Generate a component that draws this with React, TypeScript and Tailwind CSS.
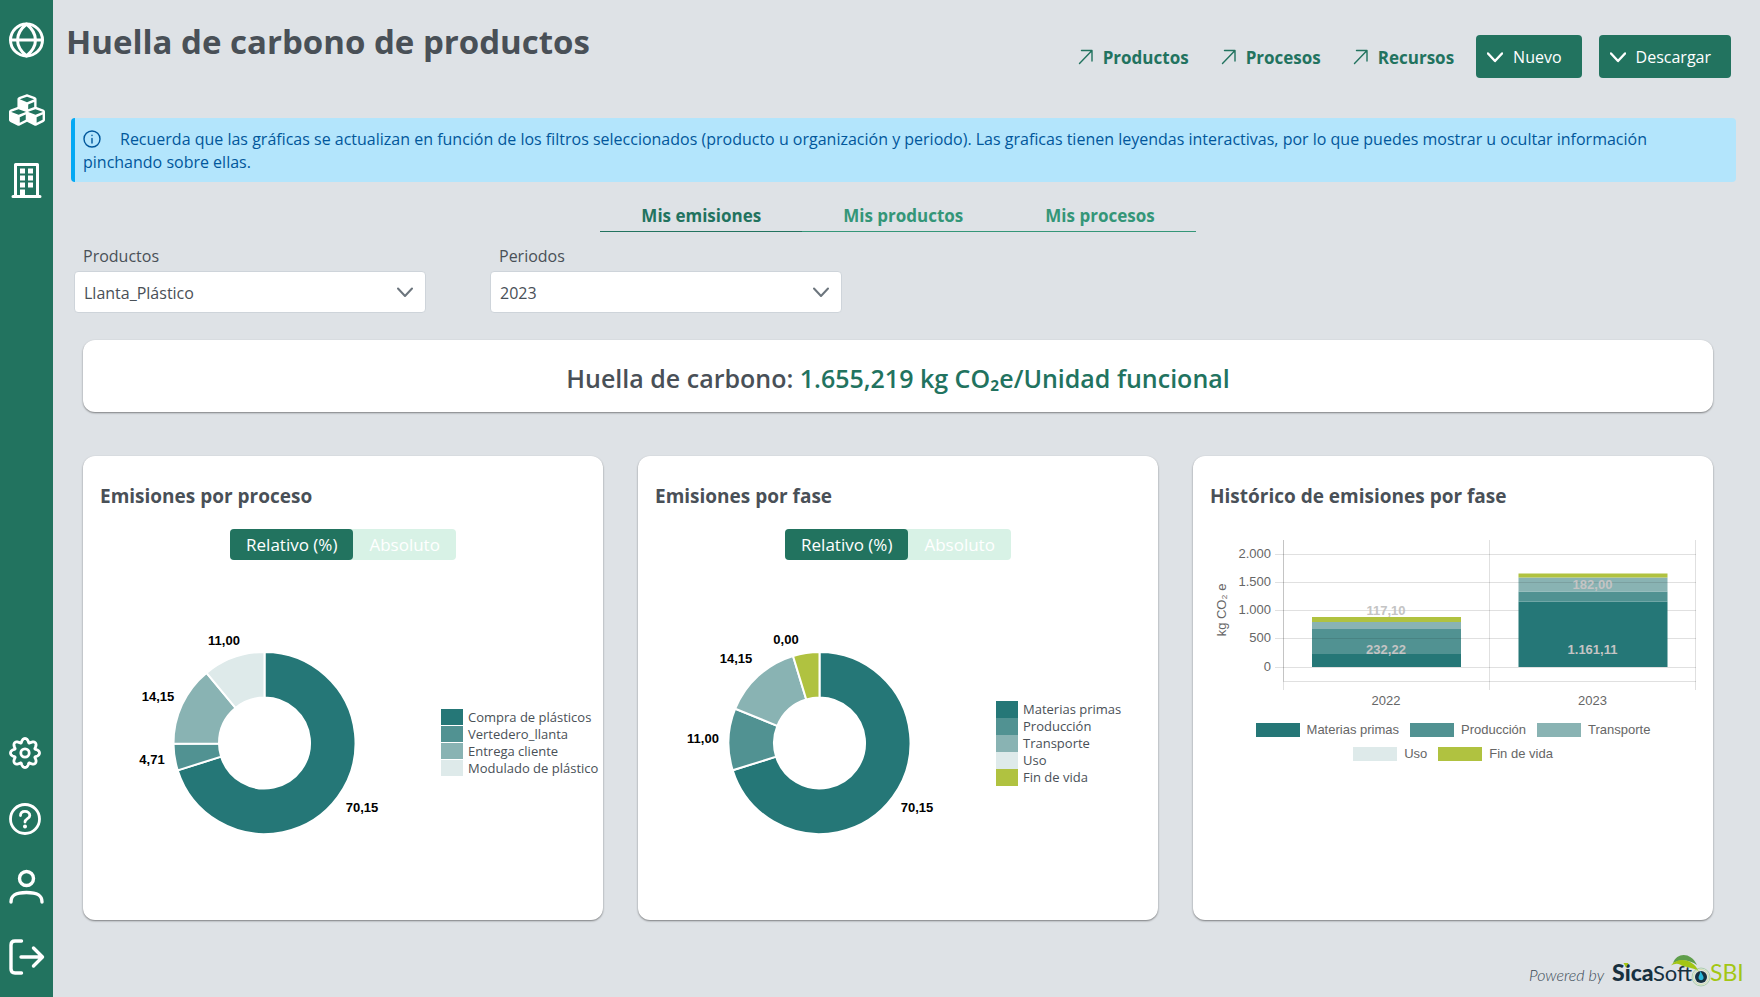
import { useState, type ReactNode } from 'react';
import { FaCubes } from 'react-icons/fa';

type Slice = { color: string; value: number };
type Label = { text: string; x: number; y: number };
type LegendItem = { name: string; color: string };

const TEAL = ['#257777', '#519292', '#89b3b3', '#deeaea', '#b0c240'];

const PROCESS_SLICES: Slice[] = [
  { color: TEAL[0], value: 70.15 },
  { color: TEAL[1], value: 4.71 },
  { color: TEAL[2], value: 14.15 },
  { color: TEAL[3], value: 11 },
];
const PROCESS_LABELS: Label[] = [
  { text: '70,15', x: 262, y: 242 },
  { text: '4,71', x: 52, y: 194 },
  { text: '14,15', x: 58, y: 131 },
  { text: '11,00', x: 124, y: 75 },
];
const PROCESS_LEGEND: LegendItem[] = [
  { name: 'Compra de plásticos', color: 'bg-[#257777]' },
  { name: 'Vertedero_llanta', color: 'bg-[#519292]' },
  { name: 'Entrega cliente', color: 'bg-[#89b3b3]' },
  { name: 'Modulado de plástico', color: 'bg-[#deeaea]' },
];

const PHASE_SLICES: Slice[] = [
  { color: TEAL[0], value: 70.15 },
  { color: TEAL[1], value: 11 },
  { color: TEAL[2], value: 14.15 },
  { color: TEAL[4], value: 4.7 },
];
const PHASE_LABELS: Label[] = [
  { text: '70,15', x: 262, y: 242 },
  { text: '11,00', x: 48, y: 173 },
  { text: '14,15', x: 81, y: 93 },
  { text: '0,00', x: 131, y: 74 },
];
const PHASE_LEGEND: LegendItem[] = [
  { name: 'Materias primas', color: 'bg-[#257777]' },
  { name: 'Producción', color: 'bg-[#519292]' },
  { name: 'Transporte', color: 'bg-[#89b3b3]' },
  { name: 'Uso', color: 'bg-[#deeaea]' },
  { name: 'Fin de vida', color: 'bg-[#b0c240]' },
];

function Icon({ className, box = 36, width = 3, children }: { className: string; box?: number; width?: number; children: ReactNode }) {
  return (
    <svg
      className={className}
      viewBox={`0 0 ${box} ${box}`}
      fill="none"
      stroke="currentColor"
      strokeWidth={width}
      strokeLinecap="round"
      strokeLinejoin="round"
      aria-hidden="true"
    >
      {children}
    </svg>
  );
}

const GlobeIcon = () => (
  <Icon className="size-9">
    <circle cx="17.500" cy="18" r="16" />
    <path d="M2 18H33M17.500 2C5.500 12 5.500 24 17.500 34C29.500 24 29.500 12 17.500 2Z" />
  </Icon>
);

const BuildingIcon = () => (
  <Icon className="size-9">
    <path d="M4 34.500H31M6.500 34V2.500H28.500V34" />
    <path
      stroke="none"
      fill="currentColor"
      d="M11 6.500h5v5h-5zM19 6.500h5v5h-5zM11 13.500h5v5h-5zM19 13.500h5v5h-5zM11 20.500h5v5h-5zM19 20.500h5v5h-5zM11 27.500h5v6h-5z"
    />
  </Icon>
);

const gearPath =
  Array.from({ length: 200 }, (_, i) => {
    const a = (i / 200) * Math.PI * 2;
    const r = 12.6 + 1.9 * Math.cos(8 * a);
    const b = a + 0.045 * Math.sin(8 * a);
    return `${i ? 'L' : 'M'}${(16 + r * Math.cos(b)).toFixed(2)} ${(16 + r * Math.sin(b)).toFixed(2)}`;
  }).join('') + 'Z';

const CogIcon = () => (
  <Icon className="size-8" box={32} width={2.8}>
    <path d={gearPath} />
    <circle cx="16" cy="16" r="4.200" />
  </Icon>
);

const QuestionIcon = () => (
  <Icon className="size-8" box={32} width={2.8}>
    <circle cx="16" cy="16" r="14.500" />
    <path d="M11.500 12.500C11.500 9.800 13.500 8.300 16 8.300S20.800 10 20.800 12.500C20.800 15.800 16 15.500 16 19" />
    <circle cx="16" cy="23.500" r="1.200" fill="currentColor" strokeWidth="1.600" />
  </Icon>
);

const UserIcon = () => (
  <Icon className="size-9" width={3.4}>
    <circle cx="17.500" cy="9.500" r="7" />
    <path d="M2 33C2 26 7 23.500 17.500 23.500S33 26 33 33" />
  </Icon>
);

const SignOutIcon = () => (
  <Icon className="size-9" width={3.4}>
    <path d="M12.500 2H6Q2 2 2 6V30Q2 34 6 34H12.500M12 18H33M24.500 9L33.500 18L24.500 27" />
  </Icon>
);

const ArrowUpRight = () => (
  <Icon className="mb-0.5 size-4" box={16} width={1.4}>
    <path d="M1.500 14.500L14 1.500M3.500 1.500H14V12" />
  </Icon>
);

const Chevron = ({ width = 2.4 }: { width?: number }) => (
  <Icon className="size-4" box={16} width={width}>
    <path d="M1 4.500L8 12L15 4.500" />
  </Icon>
);

function NavLink({ label, children }: { label: string; children: ReactNode }) {
  return (
    <a href="#" aria-label={label} title={label} className="block">
      {children}
    </a>
  );
}

function Sidebar() {
  return (
    <nav className="flex w-[53px] shrink-0 flex-col justify-between bg-[#22735f] py-[22px] pl-[9px] text-white">
      <div className="flex flex-col gap-[34px]">
        <NavLink label="Inicio">
          <GlobeIcon />
        </NavLink>
        <NavLink label="Productos">
          <FaCubes className="size-9" />
        </NavLink>
        <NavLink label="Organización">
          <BuildingIcon />
        </NavLink>
      </div>
      <div className="flex flex-col gap-[34px]">
        <NavLink label="Ajustes">
          <CogIcon />
        </NavLink>
        <NavLink label="Ayuda">
          <QuestionIcon />
        </NavLink>
        <NavLink label="Usuario">
          <UserIcon />
        </NavLink>
        <NavLink label="Salir">
          <SignOutIcon />
        </NavLink>
      </div>
    </nav>
  );
}

function Header() {
  return (
    <header className="flex items-start justify-between pt-5 pr-[29px] pl-[13px]">
      <h1 className="text-[33px] leading-[44px] font-bold">Huella de carbono de productos</h1>
      <div className="flex items-center pt-[15px]">
        <div className="mr-[22px] flex gap-8">
          {['Productos', 'Procesos', 'Recursos'].map((name) => (
            <a key={name} href="#" className="flex items-center gap-[9px] pt-0.5 text-[17px] font-bold text-[#22735f]">
              <ArrowUpRight />
              {name}
            </a>
          ))}
        </div>
        <div className="flex gap-[17px]">
          {['Nuevo', 'Descargar'].map((name) => (
            <button key={name} type="button" className="flex h-[43px] items-center gap-[10px] rounded bg-[#22735f] pr-5 pl-[11px] text-white">
              <Chevron />
              {name}
            </button>
          ))}
        </div>
      </div>
    </header>
  );
}

function Field({ id, label, value }: { id: string; label: string; value: string }) {
  return (
    <div className="w-[352px]">
      <label htmlFor={id} className="block pl-[9px] leading-6">
        {label}
      </label>
      <div className="relative mt-[3px]">
        <select id={id} className="h-[42px] w-full appearance-none rounded border border-[#ced4da] bg-white pt-0.5 pr-10 pl-[9px]">
          <option>{value}</option>
        </select>
        <span className="pointer-events-none absolute inset-y-0 right-[13px] flex items-center text-[#6c757d]">
          <Chevron width={2} />
        </span>
      </div>
    </div>
  );
}

function Card({ title, children }: { title: string; children: ReactNode }) {
  return (
    <section className="min-w-0 rounded-xl bg-white px-[17px] pt-[26px] shadow-[0_1px_2px_rgba(0,0,0,0.45)]">
      <h2 className="text-[19px] leading-7 font-bold">{title}</h2>
      {children}
    </section>
  );
}

function arc(from: number, to: number) {
  const cx = 164.5;
  const cy = 177;
  const p = (r: number, t: number) => `${(cx + r * Math.sin(t * 2 * Math.PI)).toFixed(2)} ${(cy - r * Math.cos(t * 2 * Math.PI)).toFixed(2)}`;
  const big = to - from > 0.5 ? 1 : 0;
  return `M${p(91, from)}A91 91 0 ${big} 1 ${p(91, to)}L${p(45.5, to)}A45.500 45.500 0 ${big} 0 ${p(45.5, from)}Z`;
}

function Donut({ slices, labels }: { slices: Slice[]; labels: Label[] }) {
  const total = slices.reduce((s, x) => s + x.value, 0);
  let acc = 0;
  return (
    <svg viewBox="0 0 341 354" className="w-[341px] shrink" role="img" aria-label="Gráfico de emisiones">
      {slices.map((s) => {
        const from = acc / total;
        acc += s.value;
        return <path key={s.color} d={arc(from, acc / total)} fill={s.color} stroke="#fff" strokeWidth="2" />;
      })}
      {labels.map((l) => (
        <text key={l.text} x={l.x} y={l.y + 4} textAnchor="middle" className="fill-black font-['Liberation_Sans',sans-serif] text-[13px] font-bold">
          {l.text}
        </text>
      ))}
    </svg>
  );
}

function DonutCard({ title, slices, labels, legend, spaced }: { title: string; slices: Slice[]; labels: Label[]; legend: LegendItem[]; spaced?: boolean }) {
  const [mode, setMode] = useState('Relativo (%)');
  return (
    <Card title={title}>
      <div className="mt-[19px] flex justify-center">
        <div className="flex rounded bg-[#d8f2e6] text-[17px]">
          {['Relativo (%)', 'Absoluto'].map((m) => (
            <button
              key={m}
              type="button"
              onClick={() => setMode(m)}
              className={m === mode ? 'h-[31px] rounded bg-[#22735f] px-4 text-white' : 'h-[31px] px-4 text-white'}
            >
              {m}
            </button>
          ))}
        </div>
      </div>
      <div className="mt-1.5 -mr-[17px] flex items-center">
        <Donut slices={slices} labels={labels} />
        <ul className="shrink-0 text-[13px] leading-[17px]">
          {legend.map((item) => (
            <li key={item.name} className="flex h-[17px] gap-[5px]">
              <span className={`w-[22px] ${spaced ? 'h-4' : 'h-[17px]'} ${item.color}`} />
              {item.name}
            </li>
          ))}
        </ul>
      </div>
    </Card>
  );
}

const TICKS = [
  { text: '2.000', y: 24.5 },
  { text: '1.500', y: 52.5 },
  { text: '1.000', y: 80.5 },
  { text: '500', y: 108.5 },
  { text: '0', y: 137.5 },
];
const BARS = [
  { x: 102, cuts: [137, 124, 99, 92, 87] },
  { x: 308.5, cuts: [137, 71.5, 61.5, 47.5, 43.5] },
];
const BAR_COLORS = [TEAL[0], TEAL[1], TEAL[2], TEAL[4]];
const BAR_LABELS: Label[] = [
  { text: '117,10', x: 176, y: 80 },
  { text: '232,22', x: 176, y: 118.5 },
  { text: '182,00', x: 382.5, y: 54 },
  { text: '1.161,11', x: 382.5, y: 118.5 },
];

function HistoryChart() {
  return (
    <svg viewBox="0 0 486 184" className="block w-full font-['Liberation_Sans',sans-serif] text-[13px]" role="img" aria-label="Histórico">
      <text transform="translate(16 80) rotate(-90)" textAnchor="middle" className="fill-[#666]">
        kg CO₂ e
      </text>
      <g stroke="#000" strokeOpacity="0.12">
        {TICKS.map((t) => (
          <path key={t.text} d={`M65 ${t.y}H486`} />
        ))}
        <path d="M73 151.500H486M73.500 10V160M279.500 10V160M485.500 10V160M73.500 10V151" />
      </g>
      {BARS.map((b) =>
        BAR_COLORS.map((c, i) => <rect key={`${b.x}${c}`} x={b.x} width="149" y={b.cuts[i + 1]} height={b.cuts[i] - b.cuts[i + 1]} fill={c} />),
      )}
      <path d="M102 108.500H251M308.500 52.500H457.500" stroke="#000" strokeOpacity="0.1" />
      {TICKS.map((t) => (
        <text key={t.text} x="61" y={t.y + 3.5} textAnchor="end" className="fill-[#666]">
          {t.text}
        </text>
      ))}
      {BAR_LABELS.map((l) => (
        <text key={l.text} x={l.x} y={l.y + 5} textAnchor="middle" className="fill-[#c4c4c4] font-bold">
          {l.text}
        </text>
      ))}
      <text x="176" y="174.500" textAnchor="middle" className="fill-[#666]">2022</text>
      <text x="382.500" y="174.500" textAnchor="middle" className="fill-[#666]">2023</text>
    </svg>
  );
}

function Brand() {
  return (
    <svg viewBox="0 0 220 40" className="h-10 w-[220px]" role="img" aria-label="Powered by SicaSoft SBI">
      <text x="3" y="31" className="fill-[#3b4b57] font-[Lato,sans-serif] text-[16px] font-light italic">Powered by</text>
      <g fill="#17303f">
        <text x="86" y="31" className="font-[Lato,sans-serif] text-[23px] font-black">Sica</text>
        <text x="127" y="31" className="font-[Lato,sans-serif] text-[22px]">Soft</text>
      </g>
      <path d="M97.500 13h5l-2.500 4.500z" fill="#a3c614" />
      <path d="M147 13C151 2 165 2 171 15C164 10 155 9 147 13Z" fill="#5f9e4b" />
      <path d="M145 15.500C151 7 167 8 173 22C166 16 158 18 154 14.500C151 13 148 14 145 15.500Z" fill="#a3c614" />
      <circle cx="175" cy="27" r="9" fill="none" stroke="#9fc9a0" strokeWidth="0.800" />
      <circle cx="175" cy="27" r="7.500" fill="none" stroke="#cfe0a0" strokeWidth="0.800" />
      <circle cx="175" cy="27" r="6" fill="#17303f" />
      <path d="M174.500 21C176 24.500 178 26 177.500 28.500A2.600 2.600 0 0 1 172.600 28.500C172.200 26 174 24.500 174.500 21Z" fill="#29b6d8" />
      <text x="184" y="31" className="fill-[#a3c614] font-[Lato,sans-serif] text-[23px]">SBI</text>
    </svg>
  );
}

export default function App() {
  const [tab, setTab] = useState('Mis emisiones');
  return (
    <div className="flex min-h-screen bg-[#dee2e6] font-['Open_Sans','Noto_Sans',sans-serif] text-base text-[#495057]">
      <Sidebar />
      <main className="flex min-w-0 flex-1 flex-col">
        <Header />
        <p className="mt-10 mr-6 ml-[18px] rounded border-l-4 border-[#03a9f4] bg-[#b3e5fc] pt-[10px] pr-6 pb-2 pl-2 leading-[23px] text-[#01579b]">
          <svg viewBox="0 0 18 18" className="mr-[19px] inline size-[18px] align-[-3px]" fill="none" stroke="currentColor" strokeWidth="1.400" strokeLinecap="round" aria-hidden="true">
            <circle cx="9" cy="9" r="8" />
            <path d="M9 8.500V13M9 5.200V5.600" />
          </svg>
          Recuerda que las gráficas se actualizan en función de los filtros seleccionados (producto u organización y periodo). Las graficas tienen
          leyendas interactivas, por lo que puedes mostrar u ocultar información pinchando sobre ellas.
        </p>

        <div className="mt-[18px] mr-[47px] ml-[30px] flex justify-center" role="tablist">
          {['Mis emisiones', 'Mis productos', 'Mis procesos'].map((name) => (
            <button
              key={name}
              type="button"
              role="tab"
              aria-selected={tab === name}
              onClick={() => setTab(name)}
              className={
                tab === name
                  ? 'h-8 border-b border-[#22735f] px-[41px] text-[17px] font-bold text-[#22735f]'
                  : 'h-8 border-b border-[#349678] px-[41px] text-[17px] font-bold text-[#349678]'
              }
            >
              {name}
            </button>
          ))}
        </div>

        <div className="mt-3 ml-[21px] flex gap-16">
          <Field id="producto" label="Productos" value="Llanta_Plástico" />
          <Field id="periodo" label="Periodos" value="2023" />
        </div>

        <div className="mt-[27px] mr-[47px] ml-[30px] rounded-xl bg-white pt-5 pb-4 text-center text-[25px] leading-9 font-semibold shadow-[0_1px_2px_rgba(0,0,0,0.45)]">
          Huella de carbono: <span className="text-[#22735f]">1.655,219 kg CO₂e/Unidad funcional</span>
        </div>

        <div className="mt-11 mr-[47px] ml-[30px] grid grid-cols-3 gap-[35px]">
          <DonutCard title="Emisiones por proceso" slices={PROCESS_SLICES} labels={PROCESS_LABELS} legend={PROCESS_LEGEND} spaced />
          <DonutCard title="Emisiones por fase" slices={PHASE_SLICES} labels={PHASE_LABELS} legend={PHASE_LEGEND} />
          <Card title="Histórico de emisiones por fase">
            <div className="mt-5">
              <HistoryChart />
              <ul className="mt-2 flex flex-wrap justify-center gap-x-[11px] gap-y-2 px-8 font-['Liberation_Sans',sans-serif] text-[13px] leading-4 text-[#666]">
                {PHASE_LEGEND.map((item) => (
                  <li key={item.name} className="flex items-center gap-[7px]">
                    <span className={`h-[14px] w-11 ${item.color}`} />
                    {item.name}
                  </li>
                ))}
              </ul>
            </div>
          </Card>
        </div>

        <footer className="mt-auto flex justify-end pr-[14px] pb-[7px]">
          <Brand />
        </footer>
      </main>
    </div>
  );
}
